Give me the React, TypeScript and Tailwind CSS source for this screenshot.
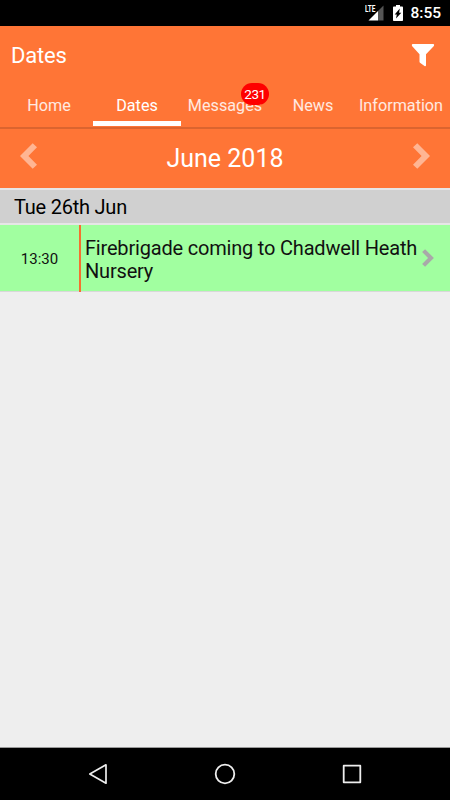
import clsx from 'clsx'

const tabs = [
  { id: 'home', label: 'Home' },
  { id: 'dates', label: 'Dates' },
  { id: 'messages', label: 'Messages', badge: 231 },
  { id: 'news', label: 'News' },
  { id: 'information', label: 'Information' },
]

const days = [
  {
    label: 'Tue 26th Jun',
    events: [{ time: '13:30', title: 'Firebrigade coming to Chadwell Heath Nursery' }],
  },
]

function StatusBar() {
  return (
    <div className="flex h-[26px] shrink-0 items-center justify-end bg-black pr-[9px] text-white">
      <span className="mb-[8px] w-[8px] text-[9px] leading-none font-bold whitespace-nowrap">
        <span className="inline-block origin-left scale-x-[0.72]">LTE</span>
      </span>
      <svg className="-ml-[5px] h-[16px] w-[16px]" viewBox="0 0 16 16">
        <path d="M10 6L15.5.5v15H10z" fill="#555" />
        <path d="M.5 15.5L10 6v9.5z" fill="#fff" />
      </svg>
      <svg className="ml-[9px] h-[16px] w-[10px]" viewBox="0 0 10 16">
        <path d="M3 0h4v1.6h2.2q.8 0 .8.8v12.8q0 .8-.8.8H.8q-.8 0-.8-.8V2.4q0-.8.8-.8H3z" fill="#fff" />
        <path d="M6.8 3.6L1.7 9.4h2.1L3 13.6l5.300-5.800H6.100z" fill="#000" />
      </svg>
      <span className="ml-[7px] pt-[2px] text-[15.5px] leading-none font-medium">8:55</span>
    </div>
  )
}

function Chevron({ direction, className }: { direction: 'left' | 'right'; className?: string }) {
  return (
    <svg className={clsx(className, direction === 'left' && 'rotate-180')} viewBox="0 0 17 26">
      <path d="M4.3.2L17 13 4.3 25.8 0 21.7 8.6 13 0 4.3z" fill="currentColor" />
    </svg>
  )
}

function TabBar({ active }: { active: string }) {
  return (
    <nav className="flex h-[43px] shrink-0 px-[5px]">
      {tabs.map(tab => (
        <button
          key={tab.id}
          type="button"
          className={clsx(
            'relative flex w-[88px] items-start justify-center border-b-[5px] pt-[13px] text-[16.2px] leading-[20px]',
            tab.id === active ? 'border-white text-white' : 'border-transparent text-white/85'
          )}
        >
          {tab.label}
          {tab.badge && (
            <span className="absolute top-0 left-[60px] flex h-[22px] w-[28px] items-center justify-center rounded-full bg-[#fe0000] text-[13.5px] tracking-[-0.5px] text-white">
              {tab.badge}
            </span>
          )}
        </button>
      ))}
    </nav>
  )
}

function EventRow({ time, title }: { time: string; title: string }) {
  return (
    <div className="flex h-[67px] border-b border-[#d8d8d8] bg-[#a1ffa0] text-[#111]">
      <div className="flex w-[79px] items-center justify-center pt-[2px] text-[15px]">{time}</div>
      <div className="-mb-px w-[2px] bg-[#f5702f]" />
      <div className="flex w-[341px] items-center pt-[4px] pl-[4px] text-[20px] leading-[23px] tracking-[-0.19px]">
        {title}
      </div>
      <Chevron direction="right" className="mt-[24px] h-[18px] w-[12px] text-[#a9a9a9]" />
    </div>
  )
}

function NavBar() {
  return (
    <div className="flex h-[53px] shrink-0 items-center justify-between border-t border-[#999] bg-black px-[88px]">
      <svg className="h-[22px] w-[20px]" viewBox="0 0 20 22" fill="none" stroke="#eee" strokeWidth="1.7" strokeLinejoin="round">
        <path d="M1.8 11L18 1.8v18.4z" />
      </svg>
      <svg className="h-[22px] w-[22px]" viewBox="0 0 22 22" fill="none" stroke="#eee" strokeWidth="1.8">
        <circle cx="11" cy="11" r="9.3" />
      </svg>
      <svg className="h-[20px] w-[20px]" viewBox="0 0 20 20" fill="none" stroke="#eee" strokeWidth="1.8" strokeLinejoin="round">
        <path d="M1.7 1.7h16.6v16.6H1.7z" />
      </svg>
    </div>
  )
}

export default function App() {
  return (
    <div className="flex h-[800px] w-[450px] flex-col overflow-hidden bg-[#eee] font-['Roboto',sans-serif]">
      <StatusBar />
      <header className="shrink-0 border-b-2 border-[#db642f] bg-[#ff7536]">
        <div className="flex h-[57px] items-center justify-between pr-[15px] pl-[11px]">
          <h1 className="pt-[2px] text-[22px] tracking-[-0.2px] text-white">Dates</h1>
          <svg className="h-[24px] w-[24px]" viewBox="0 0 24 24">
            <path d="M1.5 1h21q1.1.7.4 2L15 11.3v11.2q-.4 1-1.5.4L9 19.8q-.5-.4-.5-1.1v-7.4L1 3Q.4 1.7 1.5 1z" fill="#fff" />
          </svg>
        </div>
        <TabBar active="dates" />
        <div className="h-px" />
      </header>
      <div className="flex h-[59px] shrink-0 items-center justify-between bg-[#ff7536] px-[20px] text-white">
        <Chevron direction="left" className="mb-[5px] h-[26px] w-[17px] text-[#ffb593]" />
        <h2 className="pt-px text-[25px]">June 2018</h2>
        <Chevron direction="right" className="mb-[5px] h-[26px] w-[17px] text-[#ffb593]" />
      </div>
      <main className="flex-1">
        {days.map(day => (
          <section key={day.label}>
            <div className="flex h-[37px] items-center border-y-2 border-[#e6e6e6] bg-[#d0d0d0] pt-px pl-[14px] text-[20px] tracking-[-0.23px] text-black">
              {day.label}
            </div>
            {day.events.map(event => (
              <EventRow key={event.title} time={event.time} title={event.title} />
            ))}
          </section>
        ))}
      </main>
      <NavBar />
    </div>
  )
}
